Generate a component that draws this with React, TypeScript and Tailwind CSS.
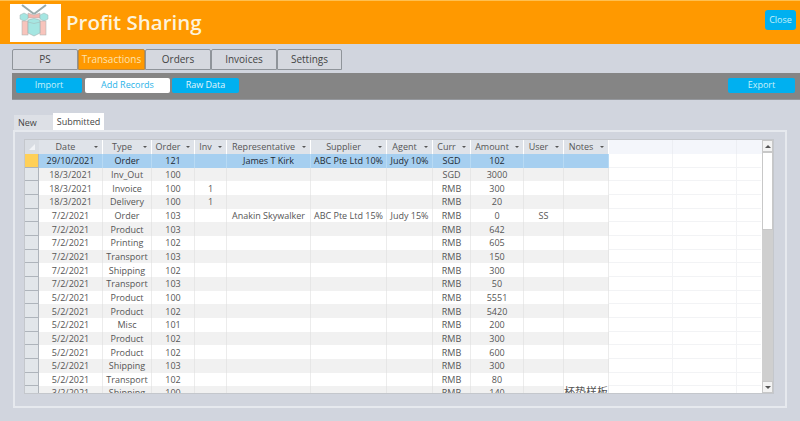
const font = "font-['Open_Sans','Noto_Sans_CJK_SC',sans-serif]";

const tabs = ["PS", "Transactions", "Orders", "Invoices", "Settings"];
const widths = ["w-[66px]", "w-[67px]", "w-[66px]", "w-[66px]", "w-[65px]"];

const headers = ["Date", "Type", "Order", "Inv", "Representative", "Supplier", "Agent", "Curr", "Amount", "User", "Notes"];

const rows = [
  ["29/10/2021", "Order", "121", "", "James T Kirk", "ABC Pte Ltd 10%", "Judy 10%", "SGD", "102", "", ""],
  ["18/3/2021", "Inv_Out", "100", "", "", "", "", "SGD", "3000", "", ""],
  ["18/3/2021", "Invoice", "100", "1", "", "", "", "RMB", "300", "", ""],
  ["18/3/2021", "Delivery", "100", "1", "", "", "", "RMB", "20", "", ""],
  ["7/2/2021", "Order", "103", "", "Anakin Skywalker", "ABC Pte Ltd 15%", "Judy 15%", "RMB", "0", "SS", ""],
  ["7/2/2021", "Product", "103", "", "", "", "", "RMB", "642", "", ""],
  ["7/2/2021", "Printing", "102", "", "", "", "", "RMB", "605", "", ""],
  ["7/2/2021", "Transport", "103", "", "", "", "", "RMB", "150", "", ""],
  ["7/2/2021", "Shipping", "102", "", "", "", "", "RMB", "300", "", ""],
  ["7/2/2021", "Transport", "103", "", "", "", "", "RMB", "50", "", ""],
  ["5/2/2021", "Product", "100", "", "", "", "", "RMB", "5551", "", ""],
  ["5/2/2021", "Product", "102", "", "", "", "", "RMB", "5420", "", ""],
  ["5/2/2021", "Misc", "101", "", "", "", "", "RMB", "200", "", ""],
  ["5/2/2021", "Product", "102", "", "", "", "", "RMB", "300", "", ""],
  ["5/2/2021", "Product", "102", "", "", "", "", "RMB", "600", "", ""],
  ["5/2/2021", "Shipping", "103", "", "", "", "", "RMB", "300", "", ""],
  ["5/2/2021", "Transport", "102", "", "", "", "", "RMB", "80", "", ""],
  ["3/2/2021", "Shipping", "100", "", "", "", "", "RMB", "140", "", "杯垫样板"],
];

const gridCols = "grid-cols-[14px_64px_49px_43px_32px_84px_76px_46px_38px_53px_40px_45px_64px_64px_24px]";

function GiftLogo() {
  return (
    <svg width="51" height="38" viewBox="0 0 51 38">
      <rect width="51" height="38" fill="#ffffff" />
      {/* ribbon tails */}
      <path d="M12 1 L24 10" fill="none" stroke="#9aabab" strokeWidth="2" />
      <path d="M36 1 L24 10" fill="none" stroke="#9aabab" strokeWidth="2" />
      {/* bow */}
      <path d="M18 9 L24 11 L30 9 V14 H18 Z" fill="#f4b6ae" stroke="#a3b0b0" strokeWidth="0.5" />
      {/* cubes */}
      <path d="M10 11 L14 9 L18 11 V15 L14 17 L10 15 Z" fill="#a5e6e2" stroke="#a3b0b0" strokeWidth="0.5" />
      <path d="M30 11 L34 9 L38 11 V15 L34 17 L30 15 Z" fill="#a5e6e2" stroke="#a3b0b0" strokeWidth="0.5" />
      {/* legs */}
      <rect x="12" y="17" width="6" height="14" fill="#f8c4bc" stroke="#a3b0b0" strokeWidth="0.5" />
      <rect x="30" y="17" width="6" height="14" fill="#f8c4bc" stroke="#a3b0b0" strokeWidth="0.5" />
      {/* body */}
      <path d="M18 16 Q24 13 30 16 V29 L24 32 L18 29 Z" fill="#a5e6e2" stroke="#a3b0b0" strokeWidth="0.6" />
      <path d="M18 18 Q24 21 30 18" fill="none" stroke="#a3b0b0" strokeWidth="0.5" />
    </svg>
  );
}

function SmallButton({ label, className }: { label: string; className: string }) {
  return (
    <div className={`h-[15px] flex items-center justify-center rounded-[2px] text-[9px] ${className}`}>
      {label}
    </div>
  );
}

function Arrow() {
  return <span className="absolute right-[4px] top-[6px] w-0 h-0 border-x-[2px] border-x-transparent border-t-[2px] border-t-[#555]" />;
}

function Sheet() {
  return (
    <div className="ml-[9px] mt-[7px] h-[255px] w-[750px] bg-white border border-[#c4c7cc] overflow-hidden flex">
      <div className="flex-1 min-w-0">
        <div className={`grid ${gridCols} h-[14px] bg-[#f4f6fb]`}>
          <div className="bg-[#d9dde3] flex items-center justify-center">
            <span className="w-0 h-0 border-l-[6px] border-l-transparent border-b-[6px] border-b-[#f1f3f6]" />
          </div>
          {headers.map((h) => (
            <div
              key={h}
              className="relative flex items-center justify-center pr-[10px] pb-[2px] bg-[#dfe3e9] border-r border-white text-[9px] leading-none text-[#555] whitespace-nowrap"
            >
              {h}
              <Arrow />
            </div>
          ))}
          <div className="border-r border-[#eceef3]" />
          <div className="border-r border-[#eceef3]" />
          <div />
        </div>
        {rows.map((r, i) => (
          <div key={i} className={`grid ${gridCols} h-[13.67px]`}>
            <div className={`border-b border-[#aeb4bb] border-r border-r-[#aeb4bb] ${i === 0 ? "bg-[#ffd058]" : "bg-[#e2e6ea]"}`} />
            {r.map((c, j) => (
              <div
                key={j}
                className={`relative flex items-center justify-center overflow-visible whitespace-nowrap border-r text-[9px] leading-none ${
                  i === 0
                    ? "bg-[#a6cff0] border-[#b8daf4] text-[#1f2a33] font-medium"
                    : i % 2 === 1
                      ? "bg-[#f1f1f1] border-[#e6e6e6] text-[#555]"
                      : "bg-white border-[#ececec] text-[#555]"
                } ${j === 10 && c ? "-top-[1px] text-[11px] !bg-transparent" : ""}`}
              >
                {c}
                {i === 17 && j === 9 && <span className="absolute left-[3px] right-[16px] bottom-[1px] h-[1px] bg-[#cfcfcf]" />}
              </div>
            ))}
            <div className="border-r border-b border-[#f2f3f5]" />
            <div className="border-r border-b border-[#f2f3f5]" />
            <div className="border-b border-[#f2f3f5]" />
          </div>
        ))}
      </div>
      <div className="w-[11px] shrink-0 flex flex-col bg-[#cfcfcf]">
        <div className="h-[12px] bg-[#f3f3f3] border border-[#c8c8c8] flex items-center justify-center">
          <span className="w-0 h-0 border-x-[3px] border-x-transparent border-b-[3px] border-b-[#555]" />
        </div>
        <div className="h-[78px] bg-white border border-[#c8c8c8]" />
        <div className="flex-1" />
        <div className="h-[12px] bg-[#f3f3f3] border border-[#c8c8c8] flex items-center justify-center">
          <span className="w-0 h-0 border-x-[3px] border-x-transparent border-t-[3px] border-t-[#555]" />
        </div>
      </div>
    </div>
  );
}

export default function App() {
  return (
    <div className={`w-[800px] h-[421px] overflow-hidden bg-[#d1d5de] flex flex-col ${font}`}>
      <div className="h-[44px] shrink-0 bg-[#ff9900] border-t border-[#ffc050] flex items-center pl-[10px] pr-[4px]">
        <GiftLogo />
        <div className="ml-[5px] text-[20.5px] leading-none font-semibold text-[#fdf3dc]">Profit Sharing</div>
        <div className="ml-auto -mt-[6px] w-[31px] h-[20px] rounded-[3px] bg-[#00b0f0] text-[#c8f0fa] text-[9px] flex items-center justify-center">
          Close
        </div>
      </div>

      <div className="mt-[5px] ml-[12px] flex h-[21px] shrink-0">
        {tabs.map((t, i) => (
          <div
            key={t}
            className={`${widths[i]} flex items-center justify-center rounded-t-[2px] border text-[10px] ${
              t === "Transactions"
                ? "bg-[#ff9900] border-[#c08a3a] text-[#fde3b0]"
                : "bg-[#d5d8df] border-[#8f949a] text-[#444]"
            }`}
          >
            {t}
          </div>
        ))}
      </div>

      <div className="mt-[3px] ml-[12px] h-[27px] shrink-0 bg-[#858585] border-b border-[#94979c] flex items-center pl-[4px] pr-[5px] pb-[2px]">
        <SmallButton label="Import" className="w-[66px] bg-[#00b0f0] text-[#c8f0fa]" />
        <SmallButton label="Add Records" className="ml-[3px] w-[85px] bg-white text-[#2ab3e8]" />
        <SmallButton label="Raw Data" className="ml-[2px] w-[67px] bg-[#00b0f0] text-[#e2f6fc]" />
        <SmallButton label="Export" className="ml-auto w-[67px] bg-[#00b0f0] text-[#c8f0fa]" />
      </div>

      <div className="mt-[12px] ml-[14px] flex items-end h-[18px] shrink-0 text-[9px] text-[#444]">
        <div className="w-[39px] h-[15px] bg-[#dde0e6] pl-[4px] flex items-center">New</div>
        <div className="w-[51px] h-[17px] bg-white flex items-center justify-center">Submitted</div>
      </div>

      <div className="ml-[13px] w-[774px] h-[278px] shrink-0 border-2 border-[#e6e9ee] bg-[#d1d5de]">
        <Sheet />
      </div>
    </div>
  );
}
